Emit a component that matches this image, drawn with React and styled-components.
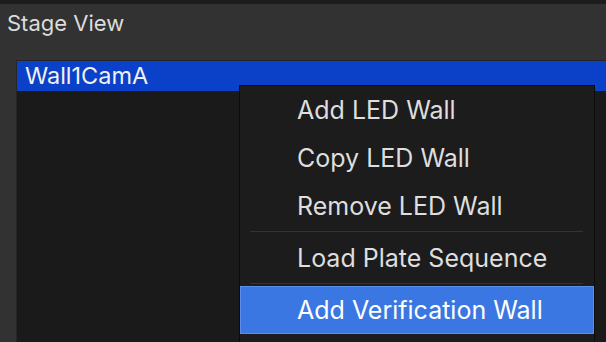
import styled, { createGlobalStyle } from "styled-components";

const GlobalStyle = createGlobalStyle`
  html, body {
    margin: 0;
    padding: 0;
    background: #323232;
    overflow: hidden;
  }
  body {
    font-family: Inter, "Noto Sans", "DejaVu Sans", sans-serif;
    -webkit-font-smoothing: antialiased;
  }
`;

const items = [
  { label: "Add LED Wall" },
  { label: "Copy LED Wall" },
  { label: "Remove LED Wall", separatorAfter: true },
  { label: "Load Plate Sequence", separatorAfter: true },
  { label: "Add Verification Wall", active: true },
];

export default function App() {
  return (
    <>
      <GlobalStyle />
      <StyledPanel>
        <StyledTitle>Stage View</StyledTitle>
        <StyledList>
          <StyledRow $selected>Wall1CamA</StyledRow>
        </StyledList>
        <StyledMenu>
          {items.map((item) => (
            <div key={item.label}>
              <StyledItem $active={item.active}>{item.label}</StyledItem>
              {item.separatorAfter && <StyledSeparator />}
            </div>
          ))}
        </StyledMenu>
      </StyledPanel>
    </>
  );
}

const StyledPanel = styled.div`
  position: relative;
  display: flex;
  flex-direction: column;
  width: 606px;
  height: 342px;
  box-sizing: border-box;
  border-top: 4px solid #1d1d1d;
  background-color: #323232;
  overflow: hidden;
`;

const StyledTitle = styled.div`
  height: 56px;
  padding: 6px 0 0 7px;
  box-sizing: border-box;
  color: #dcdcdc;
  font-size: 22px;
  line-height: 26px;
`;

const StyledList = styled.div`
  flex: 1;
  margin-left: 16px;
  border-top: 1px solid #262626;
  border-left: 1px solid #262626;
  background-color: #1a1a1a;
`;

const StyledRow = styled.div`
  height: 30px;
  padding-left: 8px;
  color: #f0f0f0;
  font-size: 23.5px;
  line-height: 30px;
  background-color: ${(p) => (p.$selected ? "#0b40c9" : "transparent")};
`;

const StyledMenu = styled.div`
  position: absolute;
  top: 81px;
  left: 239px;
  width: 356px;
  height: 270px;
  box-sizing: border-box;
  border: 1px solid #0c0c0c;
  background-color: #1c1c1c;
`;

const StyledItem = styled.div`
  height: 48px;
  padding-left: 56px;
  box-sizing: border-box;
  color: ${(p) => (p.$active ? "#ffffff" : "#dedede")};
  font-size: 25px;
  line-height: 46px;
  white-space: nowrap;
  background-color: ${(p) => (p.$active ? "#3a77e3" : "transparent")};
  border: 1px solid ${(p) => (p.$active ? "#5a8eea" : "transparent")};
`;

const StyledSeparator = styled.div`
  height: 1px;
  margin: 1px 11px 2px 10px;
  background-color: #333333;
`;
